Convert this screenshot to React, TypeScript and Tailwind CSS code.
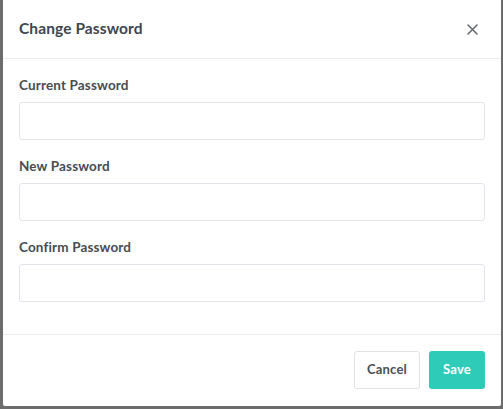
import React from 'react'

const FIELDS = ['Current Password', 'New Password', 'Confirm Password']

export default function App() {
  return (
    <div className="w-[503px] h-[409px] bg-[#6c6c6c] pl-[3px] pr-[2px] pb-[3px] font-['Lato',sans-serif]">
      <div className="h-full bg-white rounded-b-[2px] flex flex-col">
        {/* header */}
        <div className="h-[59px] shrink-0 border-b border-[#e9ecef] flex items-center justify-between px-4">
          <h2 className="text-[15.5px] font-bold tracking-[0.1px] text-[#40464d]">Change Password</h2>
          <button className="w-5 h-5 flex items-center justify-center text-[#666b70] mr-[3px]">
            <svg width="11" height="11" viewBox="0 0 11 11" fill="none">
              <path d="M1 1 L10 10 M10 1 L1 10" stroke="currentColor" strokeWidth="1.6" strokeLinecap="round" />
            </svg>
          </button>
        </div>

        {/* body */}
        <div className="flex-1 px-4 pt-[17px] flex flex-col gap-[17px] border-b border-[#e9ecef]">
          {FIELDS.map((f) => (
            <div key={f} className="flex flex-col gap-2">
              <label className="text-[13.5px] leading-[18px] font-bold tracking-[0.15px] text-[#474c52]">{f}</label>
              <input
                type="password"
                className="h-[38px] w-full rounded-[3px] border border-[#e1e5eb] outline-none"
              />
            </div>
          ))}
        </div>

        {/* footer */}
        <div className="h-[71px] shrink-0 flex items-center justify-end gap-[9px] px-4 pb-[1px]">
          <button className="h-[38px] w-[66px] rounded-[3px] border border-[#dfe2e6] text-[13px] font-bold tracking-[0.2px] text-[#4a4f55]">
            Cancel
          </button>
          <button className="h-[38px] w-[56px] rounded-[3px] bg-[#2ecbb8] text-[13px] font-bold tracking-[0.2px] text-white">
            Save
          </button>
        </div>
      </div>
    </div>
  )
}
